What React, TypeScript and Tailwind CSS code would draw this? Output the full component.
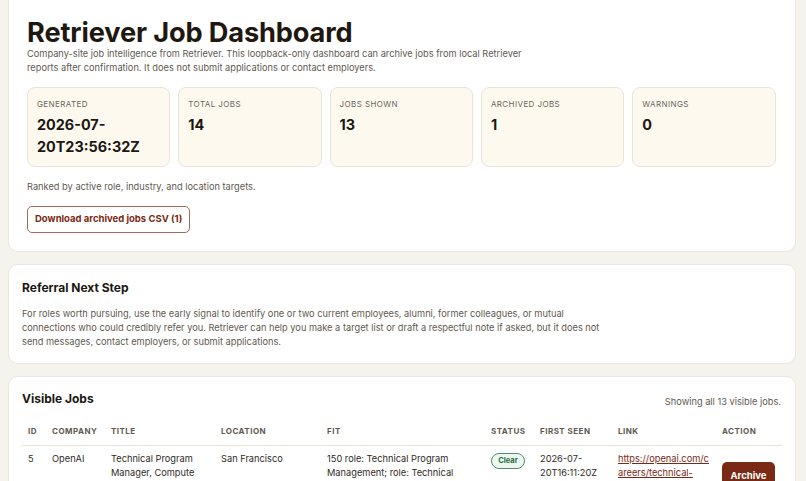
const stats = [
  { label: "Generated", value: "2026-07-20T23:56:32Z" },
  { label: "Total jobs", value: "14" },
  { label: "Jobs shown", value: "13" },
  { label: "Archived jobs", value: "1" },
  { label: "Warnings", value: "0" },
];

const columns = [
  { label: "ID", width: "w-[24px]" },
  { label: "Company", width: "w-[59px]" },
  { label: "Title", width: "w-[110px]" },
  { label: "Location", width: "w-[106px]" },
  { label: "Fit", width: "w-[164px]" },
  { label: "Status", width: "w-[49px]" },
  { label: "First seen", width: "w-[78px]" },
  { label: "Link", width: "w-[104px]" },
  { label: "Action", width: "w-[66px]" },
];

function Stat({ label, value }: { label: string; value: string }) {
  return (
    <div className="min-w-0 rounded-lg border border-[#e9e4d9] bg-[#fdf9ef] px-[9px] pt-[9px]">
      <div className="text-[8px] uppercase leading-[14px] tracking-[0.05em] text-[#6b655c]">{label}</div>
      <div className="mt-[3px] text-[14.4px] font-bold leading-[22px] text-[#1c1712] [overflow-wrap:anywhere]">{value}</div>
    </div>
  );
}

export default function App() {
  return (
    <div className="h-[481px] overflow-hidden bg-[#f5f3ed] pl-[7.5px] pr-[10.5px] font-['Inter',sans-serif] text-[#1c1712]">
      <section className="-mt-2 rounded-b-[10px] border border-[#ebe7de] bg-white pb-[18px] pl-[18.5px] pr-[19px] pt-[24px]">
        <h1 className="text-[27.2px] font-bold leading-[31px] tracking-[-0.005em] text-[#1f1811]">Retriever Job Dashboard</h1>
        <p className="-mt-px max-w-[510px] text-[9.25px] leading-[14px] text-[#5f5950]">
          Company-site job intelligence from Retriever. This loopback-only dashboard can archive jobs from local Retriever
          reports after confirmation. It does not submit applications or contact employers.
        </p>
        <div className="mt-[12px] grid h-[80px] grid-cols-5 gap-2">
          {stats.map((s) => (
            <Stat key={s.label} label={s.label} value={s.value} />
          ))}
        </div>
        <p className="mt-[13px] text-[9.25px] leading-[14px] text-[#5f5950]">Ranked by active role, industry, and location targets.</p>
        <button className="mt-[12px] block h-[27px] rounded-[5px] border border-[#a5695a] bg-white px-[7px] text-[9.5px] font-bold text-[#7a2a14]">
          Download archived jobs CSV (1)
        </button>
      </section>

      <section className="mt-[12px] h-[100px] rounded-[10px] border border-[#ebe7de] bg-white px-[13.5px] pt-[13px]">
        <h2 className="text-[12px] font-bold leading-[20px] text-[#1c1712]">Referral Next Step</h2>
        <p className="mt-[9px] max-w-[590px] text-[9.25px] leading-[14px] text-[#5f5950]">
          For roles worth pursuing, use the early signal to identify one or two current employees, alumni, former colleagues, or mutual
          connections who could credibly refer you. Retriever can help you make a target list or draft a respectful note if asked, but it does not
          send messages, contact employers, or submit applications.
        </p>
      </section>

      <section className="mt-[12px] rounded-[10px] border border-[#ebe7de] bg-white px-[13.5px] pb-4 pt-[12px]">
        <div className="flex items-center justify-between">
          <h2 className="text-[12px] font-bold leading-[20px] text-[#1c1712]">Visible Jobs</h2>
          <span className="mt-[5px] text-[9.25px] text-[#5f5950]">Showing all 13 visible jobs.</span>
        </div>
        <table className="mt-[8px] w-[760px] table-fixed border-collapse text-left">
          <thead>
            <tr className="border-b border-[#e9e4d9]">
              {columns.map((c) => (
                <th key={c.label} className={`${c.width} px-1.5 pb-[7px] pt-[7px] text-[8px] font-bold uppercase leading-[14px] tracking-[0.06em] text-[#5f5950]`}>
                  {c.label}
                </th>
              ))}
            </tr>
          </thead>
          <tbody className="align-top text-[9.25px] leading-[14.4px] text-[#2f2a24]">
            <tr>
              <td className="px-1.5 pt-[6px]">5</td>
              <td className="px-1.5 pt-[6px]">OpenAI</td>
              <td className="px-1.5 pt-[6px]">Technical Program Manager, Compute</td>
              <td className="px-1.5 pt-[6px]">San Francisco</td>
              <td className="px-1.5 pt-[6px]">150 role: Technical Program Management; role: Technical</td>
              <td className="px-1.5 pt-[7px]">
                <span className="block w-[34px] rounded-full border border-[#4d8f6a] bg-[#ecf7f0] text-center text-[7.5px] font-bold leading-[14px] text-[#1f6b42]">Clear</span>
              </td>
              <td className="px-1.5 pt-[6px]">2026-07-20T16:11:20Z</td>
              <td className="break-all px-1.5 pt-[6px]">
                <a href="#" className="text-[#7a2a14] underline">https://openai.com/careers/technical-</a>
              </td>
              <td className="px-1.5 pt-[16px]">
                <button className="h-[28px] w-[53px] rounded-[5px] bg-[#7a2a14] text-[9.5px] font-bold text-white">Archive</button>
              </td>
            </tr>
          </tbody>
        </table>
      </section>
    </div>
  );
}
